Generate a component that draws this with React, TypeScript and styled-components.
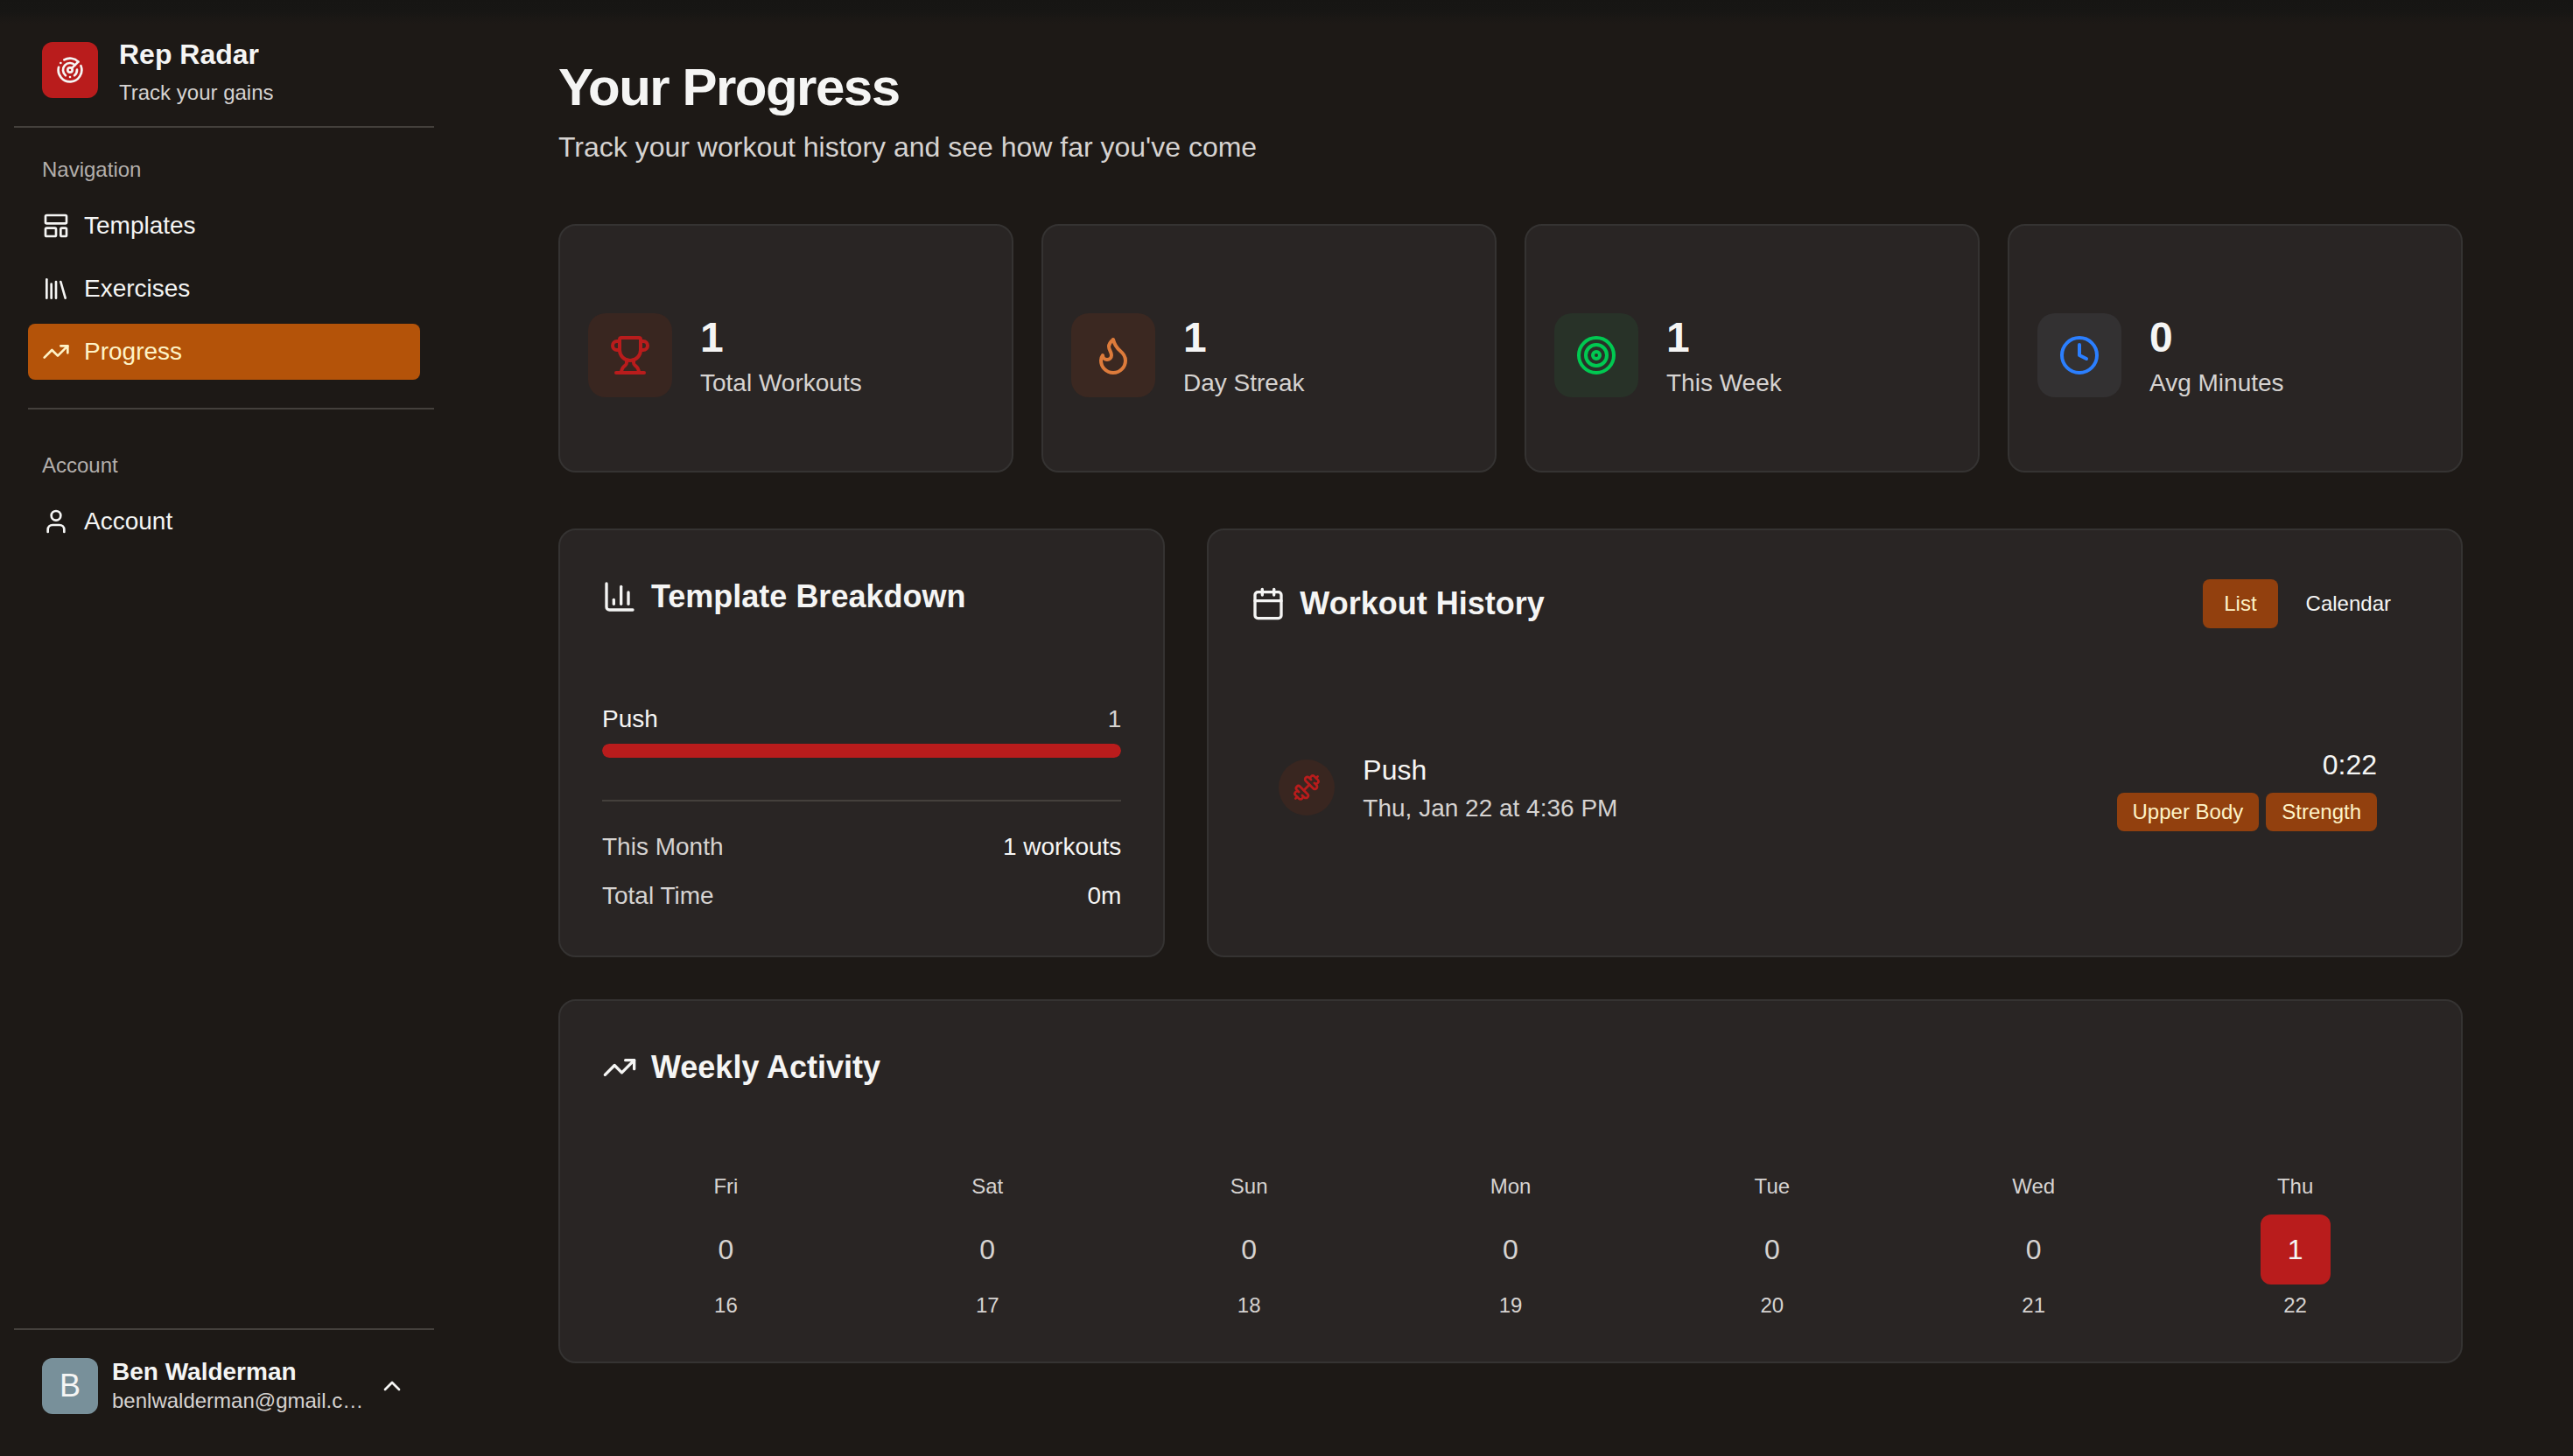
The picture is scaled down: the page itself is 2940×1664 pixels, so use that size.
import React from "react";
import styled, { createGlobalStyle } from "styled-components";
import {
  Calendar,
  ChartColumn,
  ChevronUp,
  Clock,
  Dumbbell,
  Flame,
  LayoutTemplate,
  Library,
  Radar,
  Target,
  TrendingUp,
  Trophy,
  User,
} from "lucide-react";

const color = {
  page: "#1d1916",
  card: "#292524",
  cardLine: "#353332",
  line: "#44403c",
  text: "#f5f5f4",
  muted: "#d6d3d1",
  faint: "#b3afac",
  red: "#b91c1c",
  amber: "#b45309",
  amberDark: "#92400e",
  cream: "#fef3c7",
};

const GlobalStyle = createGlobalStyle`
  *, *::before, *::after { box-sizing: border-box; }
  html, body, #root { height: 100%; }
  body {
    margin: 0;
    background: ${color.page};
    color: ${color.text};
    font-family: "Liberation Sans", Helvetica, Arial, sans-serif;
    font-size: 28px;
    line-height: 40px;
    overflow: hidden;
  }
  h1, h2, p { margin: 0; }
  svg { flex: none; display: block; }
`;

const Shell = styled.div`
  display: flex;
  height: 1664px;
  background: linear-gradient(#161513 0, #171614 13px, ${color.page} 27px);
`;

const Sidebar = styled.aside`
  display: flex;
  flex-direction: column;
  flex: none;
  width: 512px;
  padding: 16px;
`;

const Brand = styled.div`
  display: flex;
  gap: 24px;
  height: 130px;
  padding: 32px 32px 0;
  border-bottom: 2px solid ${color.line};
`;

const BrandMark = styled.div`
  display: grid;
  place-items: center;
  width: 64px;
  height: 64px;
  border-radius: 12px;
  background: ${color.red};
`;

const BrandText = styled.div`
  display: flex;
  flex-direction: column;
  gap: 8px;
  margin-top: -6px;
`;

const BrandName = styled.span`
  font-size: 32px;
  font-weight: 700;
  line-height: 40px;
`;

const BrandTag = styled.span`
  font-size: 24px;
  line-height: 32px;
  color: ${color.muted};
`;

const NavGroup = styled.nav<{ $separated?: boolean }>`
  display: flex;
  flex-direction: column;
  gap: 8px;
  margin-left: 16px;
  padding: ${(p) => (p.$separated ? "32px 16px 0 0" : "16px 16px 32px 0")};
  border-top: ${(p) => (p.$separated ? `2px solid ${color.line}` : "0")};
`;

const NavLabel = styled.span`
  display: flex;
  align-items: center;
  height: 64px;
  margin-bottom: -8px;
  padding-left: 16px;
  font-size: 24px;
  color: ${color.faint};
`;

const NavItem = styled.a<{ $active?: boolean }>`
  display: flex;
  align-items: center;
  gap: 16px;
  height: 64px;
  padding: 0 16px;
  border-radius: 8px;
  background: ${(p) => (p.$active ? color.amber : "transparent")};
  color: ${(p) => (p.$active ? color.cream : color.text)};
`;

const Profile = styled.div`
  display: flex;
  align-items: center;
  gap: 16px;
  height: 130px;
  margin-top: auto;
  padding: 0 32px;
  border-top: 2px solid ${color.line};
`;

const Avatar = styled.div`
  flex: none;
  width: 64px;
  height: 64px;
  border-radius: 12px;
  background: #78909a;
  font-size: 36px;
  line-height: 64px;
  text-align: center;
`;

const ProfileText = styled.div`
  display: flex;
  flex-direction: column;
  width: 288px;
`;

const ProfileName = styled.span`
  font-weight: 700;
  line-height: 34px;
`;

const ProfileMail = styled.span`
  font-size: 24px;
  line-height: 32px;
  white-space: nowrap;
  color: ${color.muted};
`;

const Main = styled.main`
  display: flex;
  flex-direction: column;
  width: 2176px;
  margin: 0 auto;
  padding-top: 64px;
`;

const PageHead = styled.header`
  height: 192px;
`;

const PageTitle = styled.h1`
  font-size: 60px;
  line-height: 72px;
  letter-spacing: -1.5px;
`;

const PageSubtitle = styled.p`
  margin-top: 8px;
  font-size: 32px;
  line-height: 48px;
  color: ${color.muted};
`;

const Card = styled.section`
  border: 2px solid ${color.cardLine};
  border-radius: 20px;
  background: ${color.card};
`;

const StatGrid = styled.div`
  display: grid;
  grid-template-columns: repeat(4, 1fr);
  gap: 32px;
`;

const StatCard = styled(Card)`
  display: flex;
  align-items: center;
  gap: 32px;
  height: 284px;
  padding: 96px 32px 80px;
`;

const StatIcon = styled.div<{ $fg: string; $bg: string }>`
  display: grid;
  place-items: center;
  width: 96px;
  height: 96px;
  border-radius: 20px;
  color: ${(p) => p.$fg};
  background: ${(p) => p.$bg};
`;

const StatValue = styled.div`
  font-size: 48px;
  font-weight: 700;
  line-height: 64px;
`;

const StatLabel = styled.div`
  color: ${color.muted};
`;

const PanelGrid = styled.div`
  display: grid;
  grid-template-columns: repeat(3, 1fr);
  gap: 48px;
  margin: 64px 0 48px;
`;

const Panel = styled(Card)<{ $span?: number }>`
  grid-column: span ${(p) => p.$span ?? 1};
  padding: 48px;
`;

const PanelHead = styled.div<{ $height?: number }>`
  display: flex;
  align-items: center;
  justify-content: space-between;
  height: ${(p) => p.$height ?? 56}px;
  margin-bottom: 92px;
`;

const PanelTitle = styled.h2`
  display: flex;
  align-items: center;
  gap: 16px;
  font-size: 36px;
  line-height: 56px;
`;

const Line = styled.div`
  display: flex;
  justify-content: space-between;
`;

const Muted = styled.span`
  color: ${color.muted};
`;

const Track = styled.div`
  height: 16px;
  margin-top: 8px;
  border-radius: 8px;
  overflow: hidden;
`;

const Fill = styled.div`
  height: 100%;
  border-radius: 8px;
  background: ${color.red};
`;

const Totals = styled.div`
  display: flex;
  flex-direction: column;
  gap: 16px;
  margin-top: 48px;
  padding-top: 32px;
  border-top: 2px solid ${color.line};
`;

const Switcher = styled.div`
  display: flex;
  gap: 8px;
  padding: 8px;
`;

const SwitchButton = styled.button<{ $active?: boolean }>`
  height: 56px;
  padding: 0 24px;
  border: 0;
  border-radius: 8px;
  background: ${(p) => (p.$active ? color.amberDark : "transparent")};
  color: ${(p) => (p.$active ? color.cream : color.text)};
  font: inherit;
  font-size: 24px;
`;

const Session = styled.div`
  display: flex;
  align-items: center;
  gap: 32px;
  padding: 32px 48px 32px 32px;
`;

const SessionIcon = styled.div`
  display: grid;
  place-items: center;
  width: 64px;
  height: 64px;
  border-radius: 50%;
  color: ${color.red};
  background: #392620;
`;

const SessionText = styled.div`
  flex: 1;
`;

const SessionName = styled.div`
  font-size: 32px;
  line-height: 48px;
`;

const SessionMeta = styled.div`
  display: flex;
  flex-direction: column;
  align-items: flex-end;
  gap: 8px;
`;

const BadgeRow = styled.div`
  display: flex;
  gap: 8px;
`;

const Badge = styled.span`
  padding: 6px 18px;
  border-radius: 8px;
  background: ${color.amberDark};
  color: ${color.cream};
  font-size: 24px;
  line-height: 32px;
`;

const Week = styled.div`
  display: grid;
  grid-template-columns: repeat(7, 1fr);
  gap: 16px;
`;

const Day = styled.div`
  display: flex;
  flex-direction: column;
  align-items: center;
  font-size: 24px;
  line-height: 32px;
  color: ${color.muted};
`;

const DayCount = styled.div<{ $active: boolean }>`
  width: 80px;
  height: 80px;
  margin: 16px 0 8px;
  border-radius: 12px;
  background: ${(p) => (p.$active ? color.red : "transparent")};
  color: ${(p) => (p.$active ? color.text : color.muted)};
  font-size: 32px;
  line-height: 80px;
  text-align: center;
`;

const stats = [
  { icon: Trophy, value: 1, label: "Total Workouts", fg: color.red, bg: "#392620" },
  { icon: Flame, value: 1, label: "Day Streak", fg: "#dd7b3b", bg: "#3b2821" },
  { icon: Target, value: 1, label: "This Week", fg: "#00c951", bg: "#283228" },
  { icon: Clock, value: 0, label: "Avg Minutes", fg: "#2b7fff", bg: "#333132" },
];

const templates = [{ name: "Push", count: 1 }];

const week = [
  { day: "Fri", date: 16, count: 0 },
  { day: "Sat", date: 17, count: 0 },
  { day: "Sun", date: 18, count: 0 },
  { day: "Mon", date: 19, count: 0 },
  { day: "Tue", date: 20, count: 0 },
  { day: "Wed", date: 21, count: 0 },
  { day: "Thu", date: 22, count: 1 },
];

export default function App() {
  const most = Math.max(...templates.map((t) => t.count));
  return (
    <>
      <GlobalStyle />
      <Shell>
        <Sidebar>
          <Brand>
            <BrandMark>
              <Radar size={32} />
            </BrandMark>
            <BrandText>
              <BrandName>Rep Radar</BrandName>
              <BrandTag>Track your gains</BrandTag>
            </BrandText>
          </Brand>
          <NavGroup>
            <NavLabel>Navigation</NavLabel>
            <NavItem>
              <LayoutTemplate size={32} />
              Templates
            </NavItem>
            <NavItem>
              <Library size={32} />
              Exercises
            </NavItem>
            <NavItem $active>
              <TrendingUp size={32} />
              Progress
            </NavItem>
          </NavGroup>
          <NavGroup $separated>
            <NavLabel>Account</NavLabel>
            <NavItem>
              <User size={32} />
              Account
            </NavItem>
          </NavGroup>
          <Profile>
            <Avatar>B</Avatar>
            <ProfileText>
              <ProfileName>Ben Walderman</ProfileName>
              <ProfileMail>benlwalderman@gmail.c…</ProfileMail>
            </ProfileText>
            <ChevronUp size={32} />
          </Profile>
        </Sidebar>

        <Main>
          <PageHead>
            <PageTitle>Your Progress</PageTitle>
            <PageSubtitle>Track your workout history and see how far you've come</PageSubtitle>
          </PageHead>

          <StatGrid>
            {stats.map(({ icon: Icon, value, label, fg, bg }) => (
              <StatCard key={label}>
                <StatIcon $fg={fg} $bg={bg}>
                  <Icon size={48} />
                </StatIcon>
                <div>
                  <StatValue>{value}</StatValue>
                  <StatLabel>{label}</StatLabel>
                </div>
              </StatCard>
            ))}
          </StatGrid>

          <PanelGrid>
            <Panel>
              <PanelHead>
                <PanelTitle>
                  <ChartColumn size={40} />
                  Template Breakdown
                </PanelTitle>
              </PanelHead>
              {templates.map((t) => (
                <div key={t.name}>
                  <Line>
                    <span>{t.name}</span>
                    <Muted>{t.count}</Muted>
                  </Line>
                  <Track>
                    <Fill style={{ width: `${(t.count / most) * 100}%` }} />
                  </Track>
                </div>
              ))}
              <Totals>
                <Line>
                  <Muted>This Month</Muted>
                  <span>1 workouts</span>
                </Line>
                <Line>
                  <Muted>Total Time</Muted>
                  <span>0m</span>
                </Line>
              </Totals>
            </Panel>

            <Panel $span={2}>
              <PanelHead $height={72}>
                <PanelTitle>
                  <Calendar size={40} />
                  Workout History
                </PanelTitle>
                <Switcher>
                  <SwitchButton $active>List</SwitchButton>
                  <SwitchButton>Calendar</SwitchButton>
                </Switcher>
              </PanelHead>
              <Session>
                <SessionIcon>
                  <Dumbbell size={32} />
                </SessionIcon>
                <SessionText>
                  <SessionName>Push</SessionName>
                  <Muted as="div">Thu, Jan 22 at 4:36 PM</Muted>
                </SessionText>
                <SessionMeta>
                  <SessionName>0:22</SessionName>
                  <BadgeRow>
                    <Badge>Upper Body</Badge>
                    <Badge>Strength</Badge>
                  </BadgeRow>
                </SessionMeta>
              </Session>
            </Panel>
          </PanelGrid>

          <Panel>
            <PanelHead>
              <PanelTitle>
                <TrendingUp size={40} />
                Weekly Activity
              </PanelTitle>
            </PanelHead>
            <Week>
              {week.map((d) => (
                <Day key={d.day}>
                  {d.day}
                  <DayCount $active={d.count > 0}>{d.count}</DayCount>
                  {d.date}
                </Day>
              ))}
            </Week>
          </Panel>
        </Main>
      </Shell>
    </>
  );
}
